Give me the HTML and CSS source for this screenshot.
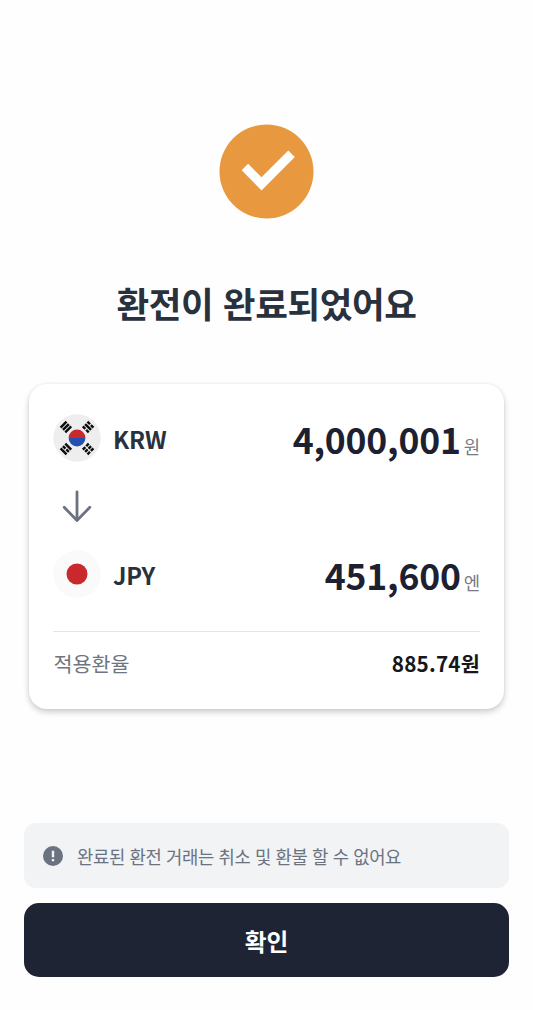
FILE: index.html
```html
<!DOCTYPE html>
<html lang="ko">
<head>
<meta charset="utf-8">
<meta name="viewport" content="width=device-width, initial-scale=1">
<title>환전 완료</title>
<link rel="stylesheet" href="styles.css">
</head>
<body>
<main class="screen">
  <svg class="success" viewBox="0 0 95 95" aria-hidden="true">
    <circle cx="47.5" cy="47.5" r="47" fill="#e8993f"/>
    <path d="M22.7 46.3 29.1 39.8 42.5 53.2 69.3 26.5 75.8 33.1 42.5 66.4Z" fill="#fff"/>
  </svg>
  <h1 class="title">환전이 완료되었어요</h1>

  <section class="card">
    <div class="row">
      <svg class="flag" viewBox="-24 -24 48 48" aria-hidden="true">
        <circle r="23.7" fill="#eee"/>
        <path d="M-8.4 0a8.4 8.4 0 0 1 16.8 0z" fill="#c9282d"/>
        <path d="M-8.4 0a8.4 8.4 0 0 0 16.8 0z" fill="#2450b0"/>
        <g stroke="#0c0c0c" stroke-width="2.4">
          <path transform="translate(-11.1 -11) rotate(-45)" d="M-4.2-3.3h8.4M-4.2 0h8.4M-4.2 3.3h8.4"/>
          <path transform="translate(11.1 -11) rotate(45)" d="M-4.2-3.3h3.6m1.2 0h3.6M-4.2 0h8.4M-4.2 3.3h3.6m1.2 0h3.6"/>
          <path transform="translate(-11.1 11) rotate(45)" d="M-4.2-3.3h8.4M-4.2 0h3.6m1.2 0h3.6M-4.2 3.3h8.4"/>
          <path transform="translate(11.1 11) rotate(-45)" d="M-4.2-3.3h3.6m1.2 0h3.6M-4.2 0h3.6m1.2 0h3.6M-4.2 3.3h3.6m1.2 0h3.6"/>
        </g>
      </svg>
      <span class="code">KRW</span>
      <span class="amount">4,000,001</span><span class="unit">원</span>
    </div>
    <div class="direction">
      <svg class="arrow" viewBox="0 0 48 34" aria-hidden="true">
        <path d="M24 3V31.5M11.2 18.3 24 31.5 36.8 18.3" fill="none" stroke="#6b7280" stroke-width="2.8" stroke-linecap="round" stroke-linejoin="round"/>
      </svg>
    </div>
    <div class="row">
      <svg class="flag" viewBox="-24 -24 48 48" aria-hidden="true">
        <circle r="23.7" fill="#fafafa"/>
        <circle r="10.5" fill="#c9282d"/>
      </svg>
      <span class="code">JPY</span>
      <span class="amount">451,600</span><span class="unit">엔</span>
    </div>
    <div class="rate">
      <span class="rate-label">적용환율</span>
      <span class="rate-value">885.74원</span>
    </div>
  </section>

  <footer class="bottom">
    <div class="notice">
      <svg class="info" viewBox="0 0 20 20" aria-hidden="true">
        <circle cx="10" cy="10" r="10" fill="#6b7280"/>
        <path d="M8.8 4.8h2.4v6.4H8.8zM8.8 13h2.4v2.3H8.8z" fill="#f1f3f5"/>
      </svg>
      <span>완료된 환전 거래는 취소 및 환불 할 수 없어요</span>
    </div>
    <button class="confirm" type="button">확인</button>
  </footer>
</main>
</body>
</html>
```
FILE: styles.css
```css
* {
  box-sizing: border-box;
}

body {
  margin: 0;
  background: #fefefe;
  color: #29313d;
  font-family: "Noto Sans CJK KR", sans-serif;
}

.screen {
  display: flex;
  flex-direction: column;
  height: 1010px;
  padding: 124px 24px 33px;
}

.success {
  align-self: center;
  width: 95px;
  height: 95px;
}

.title {
  margin: 59px 0 0;
  font-size: 35.5px;
  font-weight: 700;
  letter-spacing: -0.4px;
  line-height: 50px;
  text-align: center;
}

.card {
  height: 325px;
  margin: 56px 5px 0;
  padding: 30px 24px 0;
  border-radius: 18px;
  background: #fff;
  box-shadow: 0 3px 6px rgba(0, 0, 0, 0.2), 0 0 3px rgba(0, 0, 0, 0.06);
}

.row {
  display: flex;
  align-items: baseline;
  height: 48px;
  line-height: 48px;
}

.flag {
  align-self: center;
  width: 48px;
  height: 48px;
}

.code {
  align-self: center;
  margin: 0 auto 0 12px;
  padding-top: 2px;
  font-size: 23.7px;
  font-weight: 700;
  letter-spacing: -0.2px;
}

.amount {
  color: #1c2030;
  font-size: 35.5px;
  font-weight: 700;
  letter-spacing: -0.2px;
  line-height: 50px;
}

.unit {
  margin-left: 3px;
  color: #777b82;
  font-size: 17.8px;
}

.direction {
  display: flex;
  align-items: center;
  height: 88px;
}

.arrow {
  width: 48px;
  height: 34px;
}

.rate {
  display: flex;
  justify-content: space-between;
  margin-top: 33px;
  padding-top: 16px;
  border-top: 1px solid #e4e5e7;
  font-size: 20.7px;
  line-height: 30px;
}

.rate-label {
  padding-left: 0.5px;
  color: #6f757f;
}

.rate-value {
  color: #15171b;
  font-weight: 700;
  letter-spacing: 0.2px;
}

.bottom {
  display: flex;
  flex-direction: column;
  gap: 15px;
  margin-top: auto;
}

.notice {
  display: flex;
  align-items: center;
  gap: 14px;
  height: 65px;
  padding-left: 19px;
  border-radius: 12px;
  background: #f1f3f5;
  color: #6b7280;
  font-size: 17.75px;
  letter-spacing: -0.37px;
}

.info {
  width: 20px;
  height: 20px;
}

.confirm {
  height: 74px;
  padding: 2px 0 0;
  border: 0;
  border-radius: 15px;
  background: #1e2434;
  color: #fff;
  font-family: inherit;
  font-size: 23.7px;
  font-weight: 700;
}
```
